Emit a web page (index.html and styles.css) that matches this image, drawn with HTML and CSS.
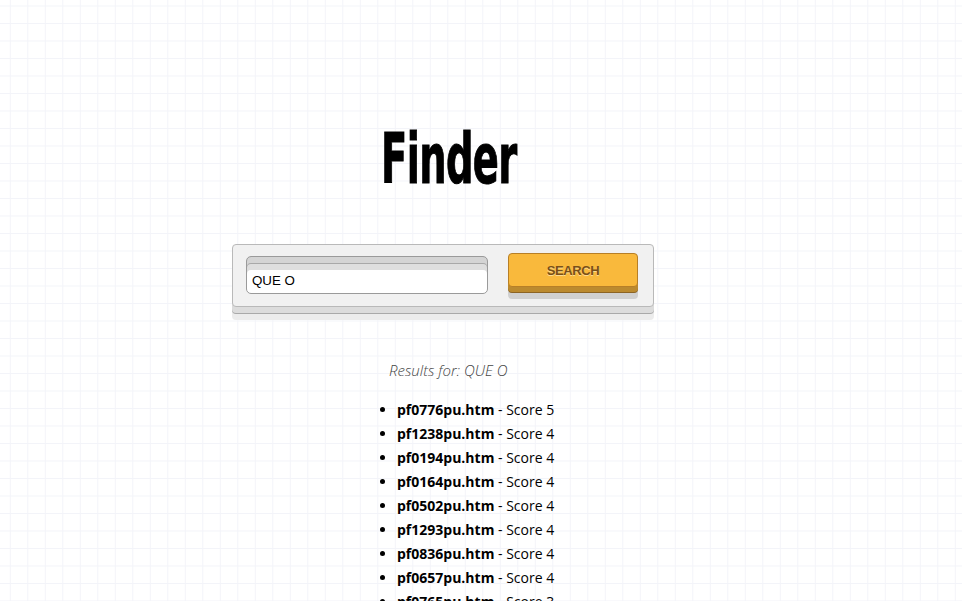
FILE: index.html
```html
<!DOCTYPE html>
<html lang="en">
<head>
<meta charset="utf-8">
<title>Finder</title>
<link rel="stylesheet" href="styles.css">
</head>
<body>
<main class="page">
  <h1 class="title"><span class="title-text">Finder</span></h1>
  <form class="search-panel">
    <div class="input-wrap">
      <input class="search-input" type="text" value="QUE O">
    </div>
    <button class="search-btn" type="button">SEARCH</button>
  </form>
  <p class="results-label">Results for: QUE O</p>
  <ul class="results">
    <li><b>pf0776pu.htm</b> - Score 5</li>
    <li><b>pf1238pu.htm</b> - Score 4</li>
    <li><b>pf0194pu.htm</b> - Score 4</li>
    <li><b>pf0164pu.htm</b> - Score 4</li>
    <li><b>pf0502pu.htm</b> - Score 4</li>
    <li><b>pf1293pu.htm</b> - Score 4</li>
    <li><b>pf0836pu.htm</b> - Score 4</li>
    <li><b>pf0657pu.htm</b> - Score 4</li>
    <li><b>pf0765pu.htm</b> - Score 3</li>
  </ul>
</main>
</body>
</html>
```

FILE: styles.css
```css
html, body {
  margin: 0;
  padding: 0;
}
body {
  background-color: #ffffff;
  background-image:
    linear-gradient(to right, #f3f4f9 1px, transparent 1px),
    linear-gradient(to bottom, #f3f4f9 1px, transparent 1px);
  background-size: 17.5px 17.5px;
  background-position: 9.8px 5.5px;
  font-family: "Open Sans", "DejaVu Sans", sans-serif;
  color: #111;
  min-height: 601px;
  overflow: hidden;
}
.page {
  width: 422px;
  margin-left: 232px;
  padding-top: 124px;
}
.title {
  margin: 0;
  height: 70px;
  padding-left: 149px;
  font-family: "Liberation Sans Narrow", "DejaVu Sans Condensed", sans-serif;
  font-weight: bold;
  font-size: 70px;
  line-height: 70px;
  color: #000;
  white-space: nowrap;
}
.title-text {
  display: inline-block;
  transform: scaleX(0.61);
  transform-origin: left center;
  letter-spacing: -1px;
  -webkit-text-stroke: 1px #000;
}
.search-panel {
  margin: 50px 0 0 0;
  display: flex;
  align-items: flex-start;
  gap: 20px;
  padding: 8px 14px 12px 13px;
  background: #f1f1f1;
  border: 1px solid #b9b9b9;
  border-radius: 4px;
  box-shadow: 0 6px 0 #dcdcdc, 0 7px 0 #a9a9a9, 0 13px 0 #ececec;
}
.input-wrap {
  margin-top: 3px;
  width: 242px;
}
.search-input {
  box-sizing: border-box;
  display: block;
  width: 242px;
  height: 38px;
  margin: 0;
  padding: 11px 5px 0 5px;
  border: 1px solid #9a9a9a;
  border-radius: 5px;
  background: #fff;
  box-shadow: inset 0 6px 0 #d4d4d4, inset 0 7px 0 #a8a8a8, inset 0 13px 0 #dedede;
  font-family: "Liberation Sans", Arial, sans-serif;
  font-size: 13.33px;
  color: #000;
  outline: none;
}
.search-btn {
  box-sizing: border-box;
  width: 130px;
  height: 34px;
  margin: 0;
  padding: 0;
  border: 1px solid #b77f27;
  border-radius: 4px;
  background: #f9b93c;
  box-shadow: 0 5px 0 #bb8a2f, 0 6px 0 #8c6424, 0 12px 0 #d0d0d0;
  font-family: "Liberation Sans", Arial, sans-serif;
  font-weight: bold;
  font-size: 13px;
  letter-spacing: -0.4px;
  color: #7a5018;
  text-shadow: 0 1px 0 rgba(255, 230, 170, 0.8);
  cursor: pointer;
}
.results-label {
  margin: 53px 0 0 0;
  padding-left: 157px;
  line-height: 20px;
  font-size: 15px;
  font-style: italic;
  font-weight: 300;
  color: #444;
}
.results {
  margin: 18px 0 0 0;
  padding-left: 165px;
  list-style: disc;
  font-size: 14px;
  line-height: 24px;
  color: #000;
}
.results b {
  font-weight: bold;
}
```
